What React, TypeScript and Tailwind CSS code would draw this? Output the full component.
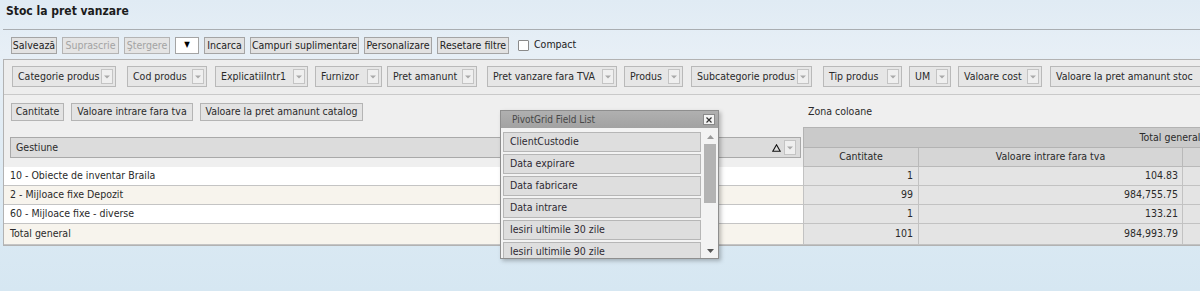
import React from "react";

function Dd() {
  return (
    <span className="flex h-[15px] w-[12px] shrink-0 items-center justify-center border border-[#c4c4c4] bg-[#efefef]">
      <svg width="6" height="4" viewBox="0 0 6 4">
        <path d="M0 0.5h6L3 3.5z" fill="#a9a9a9" />
      </svg>
    </span>
  );
}

const filters: [string, string][] = [
  ["Categorie produs", "ml-[8px] w-[104px]"],
  ["Cod produs", "ml-[11px] w-[80px]"],
  ["ExplicatiiIntr1", "ml-[8px] w-[93px]"],
  ["Furnizor", "ml-[7px] w-[67px]"],
  ["Pret amanunt", "ml-[5px] w-[90px]"],
  ["Pret vanzare fara TVA", "ml-[10px] w-[130px]"],
  ["Produs", "ml-[7px] w-[59px]"],
  ["Subcategorie produs", "ml-[8px] w-[121px]"],
  ["Tip produs", "ml-[11px] w-[79px]"],
  ["UM", "ml-[7px] w-[42px]"],
  ["Valoare cost", "ml-[7px] w-[84px]"],
  ["Valoare la pret amanunt stoc", "ml-[8px] w-[165px]"],
];

const rows = [
  { name: "10 - Obiecte de inventar Braila", q: "1", v: "104.83", bg: "bg-white", h: "h-[19px]" },
  { name: "2 - Mijloace fixe Depozit", q: "99", v: "984,755.75", bg: "bg-[#f7f4ed]", h: "h-[19px]" },
  { name: "60 - Mijloace fixe - diverse", q: "1", v: "133.21", bg: "bg-white", h: "h-[19px]" },
  { name: "Total general", q: "101", v: "984,993.79", bg: "bg-[#f7f4ed]", h: "h-[21px]" },
];

const fields = [
  "ClientCustodie",
  "Data expirare",
  "Data fabricare",
  "Data intrare",
  "Iesiri ultimile 30 zile",
  "Iesiri ultimile 90 zile",
];

export default function App() {
  return (
    <div className="relative h-[291px] w-[1200px] overflow-hidden bg-[linear-gradient(180deg,#e0ebf4_0%,#e7eff6_18%,#dfebf4_55%,#d6e7f2_100%)] font-['DejaVu_Sans_Condensed','DejaVu_Sans',sans-serif] text-[10.5px] text-[#2a2a2a]">
      {/* title */}
      <div className="h-[29px] pl-[6px] pt-[3px] text-[12px] font-bold leading-[17px] text-[#1c1c1c]">
        Stoc la pret vanzare
      </div>
      <div className="ml-[3px] border-t border-[#a9adb1]">
        {/* toolbar */}
        <div className="flex h-[29px] items-center gap-[5px] whitespace-nowrap pl-[8px] pt-[1px]">
          <button className="h-[17px] w-[46px] border border-[#a4a4a4] bg-[#e2e2e2] leading-[15px] text-[#222]">Salvează</button>
          <button className="h-[17px] w-[57px] border border-[#b4b4b4] bg-[#e4e4e4] leading-[15px] text-[#a3a3a3]">Suprascrie</button>
          <button className="h-[17px] w-[46px] border border-[#b4b4b4] bg-[#e4e4e4] leading-[15px] text-[#a3a3a3]">Ştergere</button>
          <div className="flex h-[17px] w-[24px] items-center justify-center border border-[#a4a4a4] bg-white text-[8px] text-black">▼</div>
          <button className="h-[17px] w-[41px] border border-[#a4a4a4] bg-[#e2e2e2] leading-[15px] text-[#222]">Incarca</button>
          <button className="h-[17px] w-[109px] whitespace-nowrap border border-[#a4a4a4] bg-[#e2e2e2] leading-[15px] text-[#222]">Campuri suplimentare</button>
          <button className="h-[17px] w-[68px] whitespace-nowrap border border-[#a4a4a4] bg-[#e2e2e2] leading-[15px] text-[#222]">Personalizare</button>
          <button className="h-[17px] w-[72px] whitespace-nowrap border border-[#a4a4a4] bg-[#e2e2e2] leading-[15px] text-[#222]">Resetare filtre</button>
          <span className="ml-[4px] h-[11px] w-[11px] rounded-[1px] border border-[#8a8a8a] bg-white" />
          <span className="text-[#222]">Compact</span>
        </div>

        {/* gray panel */}
        <div className="border-t border-b border-l border-[#b2b2b2] bg-[#ededed]">
          {/* filter area */}
          <div className="flex h-[35px] items-center border-b border-[#c9c9c9] pb-[1px]">
            {filters.map(([label, cls]) => (
              <div
                key={label}
                className={`flex h-[21px] shrink-0 items-center justify-between border border-[#b9b9b9] bg-[#e6e6e6] pl-[5px] pr-[2px] ${cls}`}
              >
                <span className="whitespace-nowrap">{label}</span>
                <Dd />
              </div>
            ))}
          </div>

          {/* header section */}
          <div className="flex bg-[#efefef]">
            <div className="w-[799px] shrink-0">
              <div className="flex h-[32px] items-start gap-[7px] pl-[7px] pt-[8px]">
                <div className="flex h-[18px] w-[53px] items-center justify-center border border-[#b4b4b4] bg-[#e3e3e3]">Cantitate</div>
                <div className="flex h-[18px] w-[122px] items-center justify-center border border-[#b4b4b4] bg-[#e3e3e3]">Valoare intrare fara tva</div>
                <div className="flex h-[18px] w-[163px] items-center justify-center border border-[#b4b4b4] bg-[#e3e3e3]">Valoare la pret amanunt catalog</div>
              </div>
              <div className="pl-[6px] pt-[10px] pb-[9px]">
                <div className="flex h-[21px] w-[791px] items-center border border-[#a9a9a9] bg-[#dcdcdc] pl-[5px] pr-[4px]">
                  <span>Gestiune</span>
                  <svg className="ml-auto mr-[3px]" width="9" height="8" viewBox="0 0 9 8">
                    <path d="M4.5 0.8L8.2 7.2H0.8Z" fill="none" stroke="#111" strokeWidth="1.1" />
                  </svg>
                  <Dd />
                </div>
              </div>
            </div>
            <div className="min-w-0 flex-1 overflow-hidden">
              <div className="h-[32px] pl-[5px] pt-[9px]">Zona coloane</div>
              <div className="w-[733px]">
                <div className="flex h-[21px] items-center justify-center border-t border-b border-l border-[#b3b3b3] bg-[#cacaca]">
                  Total general
                </div>
                <div className="flex h-[19px] border-b border-[#b9b9b9] bg-[#d6d6d6]">
                  <div className="flex w-[115px] items-center justify-center border-l border-[#b9b9b9]">Cantitate</div>
                  <div className="flex w-[264px] items-center justify-center border-l border-[#b9b9b9]">Valoare intrare fara tva</div>
                  <div className="flex w-[354px] items-center justify-center border-l border-[#b9b9b9]" />
                </div>
              </div>
            </div>
          </div>

          {/* data rows */}
          {rows.map((r, i) => (
            <div key={i} className={`flex ${r.h}`}>
              <div className={`flex w-[799px] shrink-0 items-center border-b border-[#c4c4c4] pl-[6px] ${r.bg}`}>{r.name}</div>
              <div className="flex min-w-0 flex-1 overflow-hidden">
                <div className="flex w-[115px] shrink-0 items-center justify-end border-b border-l border-[#c2c2c2] bg-[#e4e4e4] pr-[5px]">{r.q}</div>
                <div className="flex w-[264px] shrink-0 items-center justify-end border-b border-l border-[#c2c2c2] bg-[#e4e4e4] pr-[4px]">{r.v}</div>
                <div className="flex w-[354px] shrink-0 items-center justify-end border-b border-l border-[#c2c2c2] bg-[#e4e4e4]" />
              </div>
            </div>
          ))}
        </div>
      </div>

      {/* PivotGrid Field List popup */}
      <div className="absolute left-[500px] top-[110px] h-[149px] w-[219px] overflow-hidden border border-[#8e8e8e] bg-[#f3f3f3] shadow-[2px_2px_4px_rgba(0,0,0,0.25)]">
        <div className="flex h-[17px] items-center bg-[linear-gradient(180deg,#b0b0b0,#a2a2a2)] pl-[11px] pr-[3px] text-[10px] text-[#474747]">
          <span>PivotGrid Field List</span>
          <span className="ml-auto flex h-[11px] w-[12px] items-center justify-center border border-[#8a8a8a] bg-[#f4f4f4]">
            <svg width="6" height="6" viewBox="0 0 6 6">
              <path d="M0.5 0.5L5.5 5.5M5.5 0.5L0.5 5.5" stroke="#333" strokeWidth="1.2" />
            </svg>
          </span>
        </div>
        <div className="flex pl-[2px] pt-[4px]">
          <div className="flex w-[198px] flex-col gap-[2px]">
            {fields.map((f) => (
              <div key={f} className="flex h-[20px] shrink-0 items-center border border-[#b6b6b6] bg-[#dedede] pl-[6px] text-[#2e2a33]">
                {f}
              </div>
            ))}
          </div>
          <div className="ml-[3px] flex h-[128px] w-[12px] flex-col items-center">
            <svg className="mt-[3px]" width="7" height="4" viewBox="0 0 7 4">
              <path d="M0 4h7L3.5 0z" fill="#9a9a9a" />
            </svg>
            <div className="mt-[5px] h-[59px] w-[12px] bg-[#b3b3b3]" />
            <svg className="mt-auto mb-[7px]" width="7" height="4" viewBox="0 0 7 4">
              <path d="M0 0h7L3.5 4z" fill="#555" />
            </svg>
          </div>
        </div>
      </div>
    </div>
  );
}
